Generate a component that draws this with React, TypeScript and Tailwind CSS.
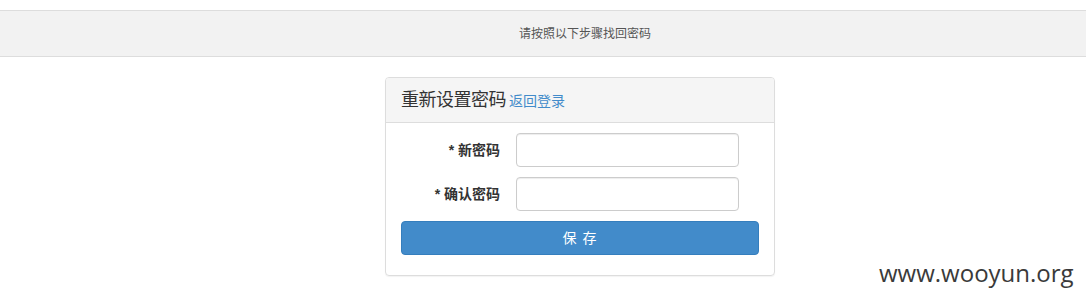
import React from 'react';

const cjk = "font-['Liberation_Sans','Noto_Sans_CJK_SC',sans-serif]";

const App: React.FC = () => {
  return (
    <div className={`relative w-[1086px] h-[302px] bg-white overflow-hidden ${cjk}`}>
      <div className="mt-[10px] h-[47px] bg-[#f2f2f2] border-y border-[#dddddd] flex items-center justify-center pl-[84px]">
        <span className="text-[12px] text-[#555555]">请按照以下步骤找回密码</span>
      </div>

      <div className="mt-[20px] ml-[385px] w-[390px] border border-[#dddddd] rounded-[4px] shadow-[0_1px_1px_rgba(0,0,0,0.05)]">
        <div className="h-[45px] bg-[#f5f5f5] border-b border-[#dddddd] rounded-t-[3px] px-[15px] flex items-center">
          <span className="text-[18px] text-[#333333] tracking-[-0.5px]">重新设置密码</span>
          <a href="#" className="ml-[3px] text-[14px] text-[#428bca] mt-[2px]">返回登录</a>
        </div>
        <div className="px-[15px] pt-[10px] pb-[20px]">
          {[
            { label: '新密码', type: 'password' },
            { label: '确认密码', type: 'password' },
          ].map(row => (
            <div key={row.label} className="flex items-center mb-[10px]">
              <label className="w-[99px] text-right text-[14px] font-bold text-[#333333]">* {row.label}</label>
              <input
                type={row.type}
                className="ml-[16px] w-[223px] h-[34px] border border-[#cccccc] rounded-[4px] px-[12px] text-[14px] shadow-[inset_0_1px_1px_rgba(0,0,0,0.075)] outline-none"
              />
            </div>
          ))}
          <button className="w-full h-[34px] bg-[#428bca] border border-[#357ebd] rounded-[4px] text-white text-[14px] tracking-[1px]">
            保 存
          </button>
        </div>
      </div>

      <div className="absolute left-[879px] top-[255px] text-[24px] text-[#3a3a3a] font-['Open_Sans',sans-serif]">
        www.wooyun.org
      </div>
    </div>
  );
};

export default App;
